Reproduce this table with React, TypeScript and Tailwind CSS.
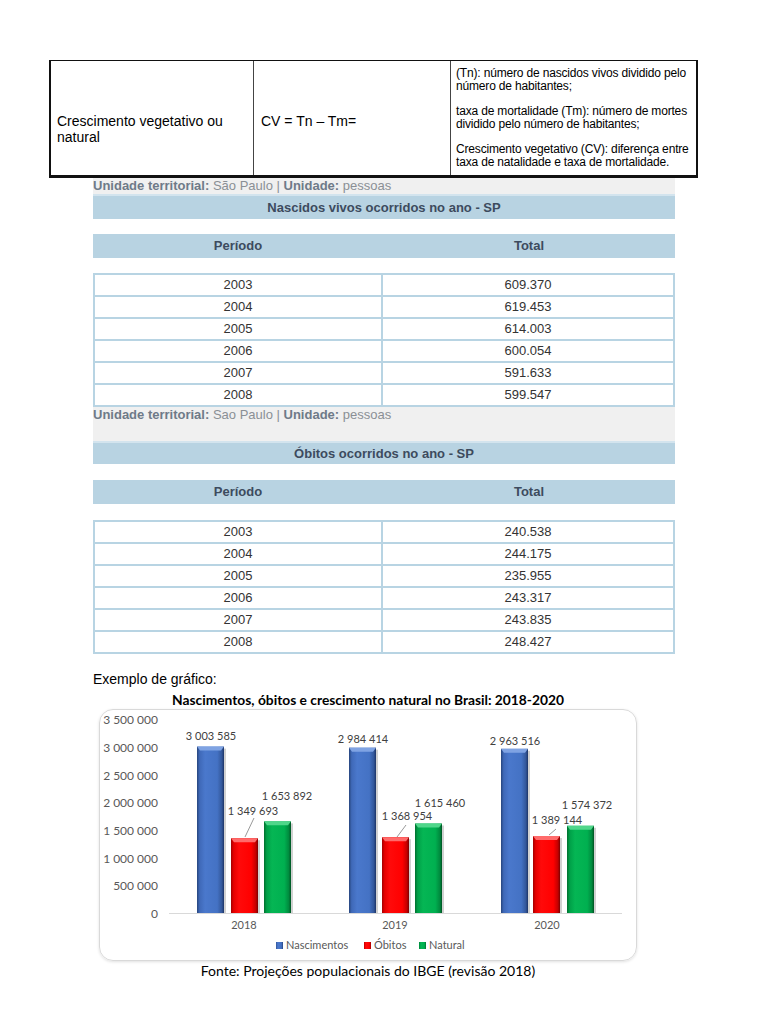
import React from "react";

const years = ["2003", "2004", "2005", "2006", "2007", "2008"];
const nascidos = ["609.370", "619.453", "614.003", "600.054", "591.633", "599.547"];
const obitos = ["240.538", "244.175", "235.955", "243.317", "243.835", "248.427"];

function DataTable({ values }: { values: string[] }) {
  return (
    <div className="border-2 border-b-0 border-[#b8d4e3] text-[13px] text-[#333333]">
      {years.map((y, i) => (
        <div key={y} className="flex h-[22px] border-b-2 border-[#b8d4e3]">
          <div className="w-[288px] border-r-2 border-[#b8d4e3] flex items-center justify-center">{y}</div>
          <div className="flex-1 flex items-center justify-center">{values[i]}</div>
        </div>
      ))}
    </div>
  );
}

function HeaderRow() {
  return (
    <div className="flex h-[24px] bg-[#b8d3e2] text-[13px] font-bold text-[#3d4b5e]">
      <div className="w-[290px] flex items-center justify-center">Período</div>
      <div className="flex-1 flex items-center justify-center">Total</div>
    </div>
  );
}

const S = 27.7 / 500000;
const base = 914;

type Bar = { x: number; v: number; fill: string; cap: string };

function BarShape({ x, v, fill, cap }: Bar) {
  const w = 27;
  const top = base - v * S;
  return (
    <g>
      <rect x={x + 2} y={top + 2} width={w} height={base - top - 2} fill="#000" opacity="0.18" />
      <rect x={x} y={top} width={w} height={base - top} fill={fill} />
      <polygon points={`${x},${top} ${x + w},${top} ${x + w - 3},${top + 4} ${x + 3},${top + 4}`} fill={cap} />
    </g>
  );
}

function fmt(n: number) {
  return n.toString().replace(/\B(?=(\d{3})+(?!\d))/g, " ");
}

function Chart() {
  const groups = [
    { year: "2018", cx: 244, b: 3003585, o: 1349693, n: 1653892, bx: 197, ox: 231, nx: 264,
      bl: { x: 211, y: 737 }, ol: { x: 253, y: 812 }, nl: { x: 287, y: 797 }, lead: [245, 838, 254, 819] },
    { year: "2019", cx: 395, b: 2984414, o: 1368954, n: 1615460, bx: 349, ox: 382, nx: 415,
      bl: { x: 363, y: 740 }, ol: { x: 407, y: 817 }, nl: { x: 440, y: 804 }, lead: [397, 838, 406, 826] },
    { year: "2020", cx: 547, b: 2963516, o: 1389144, n: 1574372, bx: 501, ox: 533, nx: 567,
      bl: { x: 515, y: 742 }, ol: { x: 557, y: 821 }, nl: { x: 587, y: 806 }, lead: [549, 836, 556, 830] },
  ];
  const ticks = ["0", "500 000", "1 000 000", "1 500 000", "2 000 000", "2 500 000", "3 000 000", "3 500 000"];
  return (
    <svg width="536" height="250" viewBox="100 711 536 250" style={{ fontFamily: "Lato, 'Open Sans', sans-serif" }}>
      <defs>
        <linearGradient id="gb" x1="0" x2="1" y1="0" y2="0">
          <stop offset="0" stopColor="#27457d" />
          <stop offset="0.1" stopColor="#3f69b8" />
          <stop offset="0.3" stopColor="#4a78cc" />
          <stop offset="0.75" stopColor="#4472c4" />
          <stop offset="0.92" stopColor="#33579a" />
          <stop offset="1" stopColor="#1d3466" />
        </linearGradient>
        <linearGradient id="gr" x1="0" x2="1" y1="0" y2="0">
          <stop offset="0" stopColor="#a30000" />
          <stop offset="0.1" stopColor="#e60000" />
          <stop offset="0.3" stopColor="#ff0a0a" />
          <stop offset="0.75" stopColor="#ff0000" />
          <stop offset="0.92" stopColor="#c40000" />
          <stop offset="1" stopColor="#7a0000" />
        </linearGradient>
        <linearGradient id="gg" x1="0" x2="1" y1="0" y2="0">
          <stop offset="0" stopColor="#00702f" />
          <stop offset="0.1" stopColor="#00a048" />
          <stop offset="0.3" stopColor="#05b654" />
          <stop offset="0.75" stopColor="#00b050" />
          <stop offset="0.92" stopColor="#008a3e" />
          <stop offset="1" stopColor="#005222" />
        </linearGradient>
      </defs>
      {ticks.map((t, i) => (
        <text key={t} x={158} y={base - i * 27.7 + 5} textAnchor="end" fontSize="12" fill="#595959">
          {t}
        </text>
      ))}
      <line x1={169} x2={622} y1={base + 0.5} y2={base + 0.5} stroke="#d9d9d9" strokeWidth="1" />
      {groups.map((g) => (
        <g key={g.year}>
          <BarShape x={g.bx} v={g.b} fill="url(#gb)" cap="#7fa3e3" />
          <BarShape x={g.ox} v={g.o} fill="url(#gr)" cap="#ff6b6b" />
          <BarShape x={g.nx} v={g.n} fill="url(#gg)" cap="#4fd68a" />
          <line x1={g.lead[0]} y1={g.lead[1]} x2={g.lead[2]} y2={g.lead[3]} stroke="#7f7f7f" strokeWidth="0.8" />
          <text x={g.bl.x} y={g.bl.y + 4} textAnchor="middle" fontSize="11" fill="#404040">
            {fmt(g.b)}
          </text>
          <text x={g.ol.x} y={g.ol.y + 4} textAnchor="middle" fontSize="11" fill="#404040">
            {fmt(g.o)}
          </text>
          <text x={g.nl.x} y={g.nl.y + 4} textAnchor="middle" fontSize="11" fill="#404040">
            {fmt(g.n)}
          </text>
          <text x={g.cx} y={926 + 4} textAnchor="middle" fontSize="11" fill="#595959">
            {g.year}
          </text>
        </g>
      ))}
      <g fontSize="11" fill="#595959">
        <rect x={276} y={943} width={7} height={7} fill="url(#gb)" />
        <text x={286} y={950}>Nascimentos</text>
        <rect x={364} y={943} width={7} height={7} fill="url(#gr)" />
        <text x={374} y={950}>Óbitos</text>
        <rect x={419} y={943} width={7} height={7} fill="url(#gg)" />
        <text x={429} y={950}>Natural</text>
      </g>
    </svg>
  );
}

export default function App() {
  return (
    <div className="w-[768px] h-[1024px] bg-white pt-[60px]" style={{ fontFamily: "'Liberation Sans', Arial, sans-serif" }}>
      {/* Top definition table */}
      <div className="ml-[49px] w-[649px] h-[118px] flex border-t border-l-2 border-r-2 border-b-[3px] border-[#111111] text-black">
        <div className="w-[203px] border-r border-[#444444] pt-[52px] pl-[6px] text-[14px] leading-[16px]">
          Crescimento vegetativo ou<br />natural
        </div>
        <div className="w-[197px] border-r border-[#444444] pt-[52px] pl-[7px] text-[14px] leading-[16px]">
          CV = Tn – Tm=
        </div>
        <div className="flex-1 pt-[6px] pl-[5px] text-[12px] leading-[13px] tracking-[-0.17px] whitespace-nowrap flex flex-col gap-[12px]">
          <p>(Tn): número de nascidos vivos dividido pelo<br />número de habitantes;</p>
          <p>taxa de mortalidade (Tm): número de mortes<br />dividido pelo número de habitantes;</p>
          <p>Crescimento vegetativo (CV): diferença entre<br />taxa de natalidade e taxa de mortalidade.</p>
        </div>
      </div>

      {/* IBGE section 1 */}
      <div className="ml-[93px] w-[582px]">
        <div className="h-[16px] bg-[#f0f0f0] text-[13px] leading-[15px] text-[#8a8f95]">
          <span className="font-bold text-[#6e7a88]">Unidade territorial:</span> São Paulo | <span className="font-bold text-[#6e7a88]">Unidade:</span> pessoas
        </div>
        <div className="h-[25px] bg-[#b8d3e2] border-t-2 border-[#d3e4ee] flex items-center justify-center text-[13px] font-bold text-[#3d4b5e]">
          Nascidos vivos ocorridos no ano - SP
        </div>
        <div className="h-[15px]" />
        <HeaderRow />
        <div className="h-[15px]" />
        <DataTable values={nascidos} />

        {/* IBGE section 2 */}
        <div className="h-[34px] bg-[#f0f0f0] text-[13px] leading-[16px] text-[#8a8f95]">
          <span className="font-bold text-[#6e7a88]">Unidade territorial:</span> Sao Paulo | <span className="font-bold text-[#6e7a88]">Unidade:</span> pessoas
        </div>
        <div className="h-[23px] bg-[#b8d3e2] border-t-2 border-[#d3e4ee] flex items-center justify-center text-[13px] font-bold text-[#3d4b5e]">
          Óbitos ocorridos no ano - SP
        </div>
        <div className="h-[16px]" />
        <HeaderRow />
        <div className="h-[16px]" />
        <DataTable values={obitos} />
      </div>

      <div className="ml-[93px] mt-[17px] text-[14px] leading-[16px] text-black">Exemplo de gráfico:</div>

      <div className="ml-[99px] w-[538px] mt-[5px] text-center text-[13.8px] leading-[15px] font-bold text-black" style={{ fontFamily: "Lato, sans-serif" }}>
        Nascimentos, óbitos e crescimento natural no Brasil: 2018-2020
      </div>
      <div className="ml-[99px] mt-[2px] w-[538px] h-[252px] rounded-[14px] border border-[#d9d9d9] shadow-[0_1px_3px_rgba(0,0,0,0.12)] overflow-hidden">
        <Chart />
      </div>
      <div className="ml-[99px] w-[538px] mt-[1px] text-center text-[14px] leading-[17px] text-black" style={{ fontFamily: "Lato, sans-serif" }}>
        Fonte: Projeções populacionais do IBGE (revisão 2018)
      </div>
    </div>
  );
}
